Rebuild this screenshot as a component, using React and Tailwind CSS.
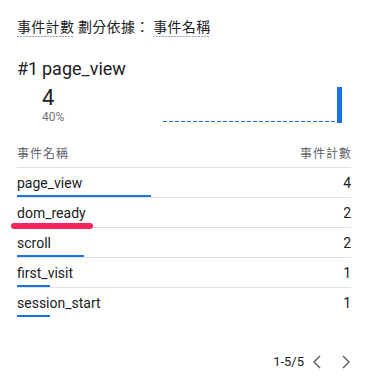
import React from "react";

const rows = [
  { name: "page_view", count: 4, pct: 40 },
  { name: "dom_ready", count: 2, pct: 20, highlight: true },
  { name: "scroll", count: 2, pct: 20 },
  { name: "first_visit", count: 1, pct: 10 },
  { name: "session_start", count: 1, pct: 10 },
];

const dash =
  "bg-[linear-gradient(to_right,#9aa0a6_60%,transparent_60%)] bg-[length:3px_1px] bg-repeat-x bg-bottom";

export default function App() {
  return (
    <div className="w-[370px] h-[381px] bg-white pl-[17px] pr-[19px] font-['Roboto','Noto_Sans_CJK_TC',sans-serif] text-[#202124] overflow-hidden">
      {/* Title */}
      <div className="pt-[18px] text-[14px] leading-[18px] tracking-[0.3px] text-[#202124] whitespace-nowrap">
        <span className={`inline-block pb-[1px] ${dash}`}>事件計數</span>
        <span> 劃分依據： </span>
        <span className={`inline-block pb-[1px] ${dash}`}>事件名稱</span>
      </div>

      {/* Stats */}
      <div className="mt-[20px] flex text-[18px] leading-[24px]">
        <span className="w-[25px]">#1</span>
        <span>page_view</span>
      </div>
      <div className="flex">
        <div className="w-[146px] pl-[25px]">
          <div className="mt-[3px] text-[22px] leading-[28px]">4</div>
          <div className="mt-[-2px] text-[12px] leading-[14px] text-[#70757a]">40%</div>
        </div>
        <div className="mt-[6px] h-[36px]">
          <svg width="179" height="36" viewBox="0 0 179 36">
            <line x1="0" y1="34.5" x2="174" y2="34.5" stroke="#1a73e8" strokeWidth="1.2" strokeDasharray="4 2" />
            <rect x="174" y="0" width="5" height="36" fill="#1a73e8" />
          </svg>
        </div>
      </div>

      {/* Table */}
      <div className="mt-[16px]">
        <div className="h-[28px] box-border border-b border-[#e0e0e0] flex items-center justify-between text-[12px] leading-[16px] tracking-[1px] text-[#5f6368]">
          <span>事件名稱</span>
          <span className="mr-[-1px]">事件計數</span>
        </div>
        {rows.map((r, i) => (
          <div
            key={r.name}
            className={`relative h-[30px] box-border ${i < rows.length - 1 ? "border-b border-[#e0e0e0]" : ""}`}
          >
            <div className="pt-[5px] flex justify-between text-[14px] leading-[20px]">
              <span>{r.name}</span>
              <span>{r.count}</span>
            </div>
            <div className="mt-[2px] h-[2px] bg-[#1a73e8]" style={{ width: `${r.pct}%` }} />
            {r.highlight && (
              <div className="absolute left-[-6px] top-[25px] w-[82px] h-[6px] rounded-full bg-[#f5265f]" />
            )}
          </div>
        ))}
      </div>

      {/* Pagination */}
      <div className="mt-[32px] h-[24px] flex items-center justify-end text-[13px] leading-[16px] text-[#202124]">
        <span>1-5/5</span>
        <svg className="ml-[9px]" width="8" height="14" viewBox="0 0 8 14">
          <polyline points="7,1 1,7 7,13" fill="none" stroke="#5f6368" strokeWidth="1.5" />
        </svg>
        <svg className="ml-[21px] mr-[1px]" width="8" height="14" viewBox="0 0 8 14">
          <polyline points="1,1 7,7 1,13" fill="none" stroke="#5f6368" strokeWidth="1.5" />
        </svg>
      </div>
    </div>
  );
}
